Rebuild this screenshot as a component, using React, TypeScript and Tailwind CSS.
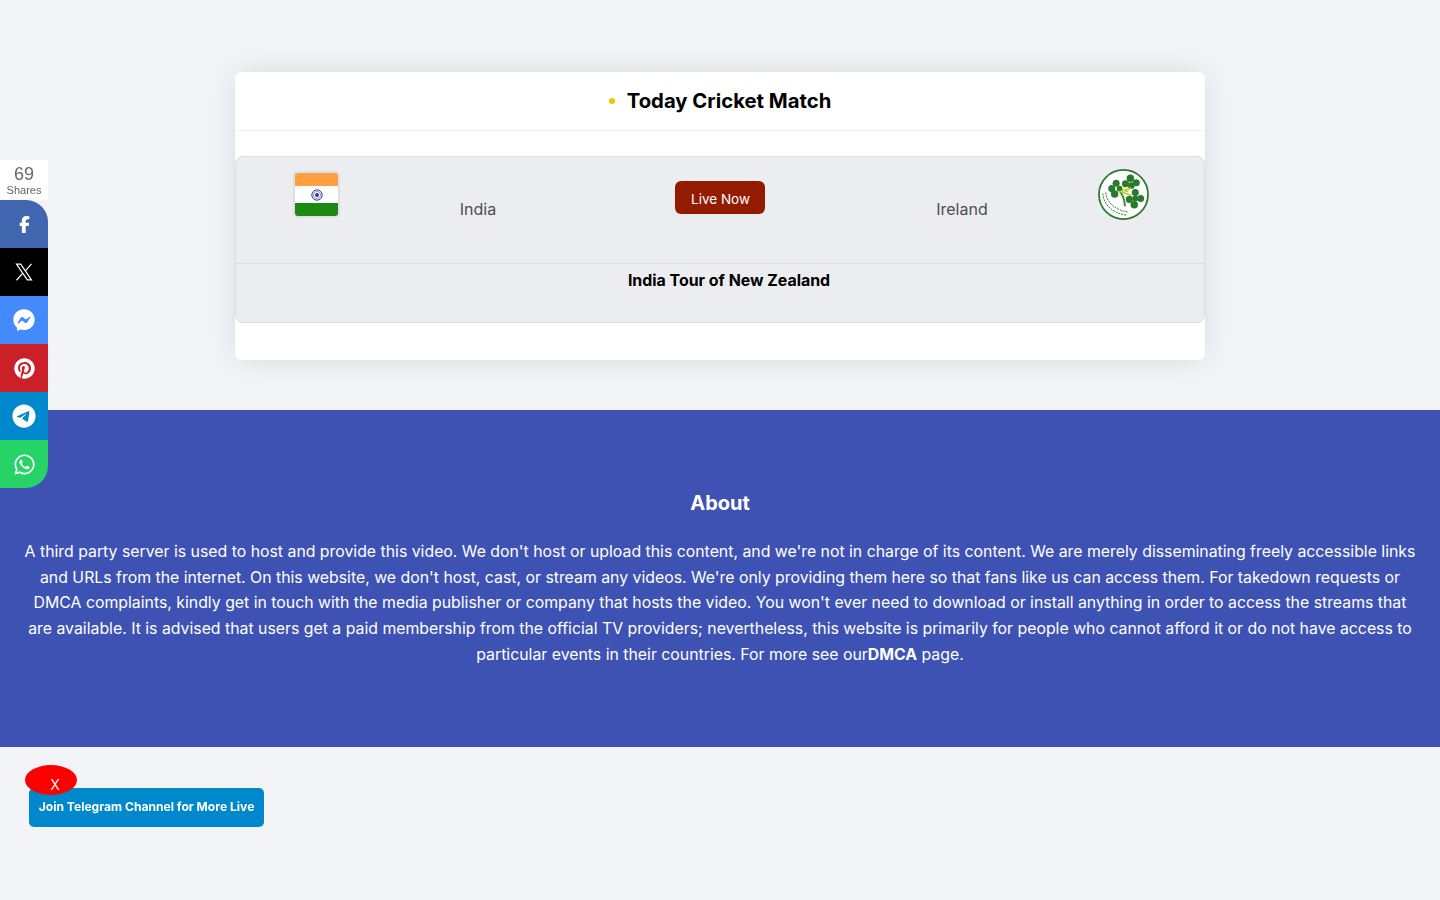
import { FaFacebookF, FaFacebookMessenger, FaPinterest, FaTelegram, FaWhatsapp } from "react-icons/fa6";

function XIcon({ size }: { size: number }) {
  return (
    <svg width={size} height={size} viewBox="0 0 24 24" fill="none" stroke="currentColor" strokeWidth="1.6">
      <path d="M2 1.5h5.6L22 22.5h-5.6z" />
      <path d="M22 1.2l-8.4 9.6M10.4 13.6L2 23" />
    </svg>
  );
}

const shares = [
  { icon: FaFacebookF, bg: "bg-[#3f66ae]", size: 17, shape: "rounded-tr-[22px]" },
  { icon: XIcon, bg: "bg-black", size: 18, shape: "" },
  { icon: FaFacebookMessenger, bg: "bg-[#448aff]", size: 22, shape: "" },
  { icon: FaPinterest, bg: "bg-[#cb2027]", size: 21, shape: "" },
  { icon: FaTelegram, bg: "bg-[#0088cc]", size: 24, shape: "" },
  { icon: FaWhatsapp, bg: "bg-[#25d366]", size: 23, shape: "rounded-br-[22px]" },
];

function IndiaFlag() {
  return (
    <div className="h-[47px] w-[47px] rounded-[5px] bg-[#dfe0e2] p-0.5">
      <div className="flex h-full w-full flex-col overflow-hidden rounded-[3px]">
        <div className="h-[13px] bg-[#ffa040]" />
        <div className="flex h-[17px] items-center justify-center bg-white">
          <svg width="12" height="12" viewBox="0 0 12 12">
            <circle cx="6" cy="6" r="5.2" fill="none" stroke="#303a92" strokeWidth="1" />
            <circle cx="6" cy="6" r="2" fill="#303a92" />
            <circle cx="6" cy="6" r="3.6" fill="none" stroke="#8d92c9" strokeWidth="1" />
          </svg>
        </div>
        <div className="flex-1 bg-[#1c8a12]" />
      </div>
    </div>
  );
}

function IrelandLogo() {
  return (
    <svg width="51" height="51" viewBox="0 0 52 52">
      <circle cx="26" cy="26" r="25" fill="#fff" stroke="#2b7a2d" strokeWidth="1.8" />
      <path d="M5 25C5 35 14 45 29 47" fill="none" stroke="#2b7a2d" strokeWidth="1" strokeDasharray="2 1" />
      <path d="M8 24C8 33 17 42 31 44" fill="none" stroke="#2b7a2d" strokeWidth="1" strokeDasharray="2 1" />
      <g fill="#2a7a2c">
        <circle cx="14" cy="20" r="3.6" />
        <circle cx="18.5" cy="14.5" r="3.6" />
        <circle cx="22" cy="20" r="3" />
        <circle cx="17" cy="25.5" r="3.8" />
        <circle cx="28" cy="15" r="3.6" />
        <circle cx="33" cy="9.5" r="3.8" />
        <circle cx="39" cy="14" r="3.6" />
        <circle cx="34" cy="17" r="3.4" />
        <circle cx="38" cy="24" r="3.6" />
        <circle cx="43.5" cy="30" r="3.6" />
        <circle cx="37" cy="36.5" r="3.8" />
        <circle cx="32" cy="31" r="3.6" />
        <circle cx="38" cy="30" r="3" />
      </g>
      <path d="M27.5 38C27 32 26.5 29 22.5 23" fill="none" stroke="#3d8b2e" strokeWidth="2" />
      <path d="M34 19.5L22.5 23L34 27M27 22L31 23.5" fill="none" stroke="#b4cf2a" strokeWidth="1.6" />
    </svg>
  );
}

export default function App() {
  return (
    <div className="min-h-[900px] bg-[#f3f4f8] font-['Inter',sans-serif] text-[#444]">
      {/* Share bar */}
      <div className="fixed left-0 top-[160px] z-10 w-12 font-['Liberation_Sans',sans-serif]">
        <div className="flex h-10 flex-col items-center bg-white pt-[4px] text-[#666]">
          <span className="text-[18px] leading-[20px]">69</span>
          <span className="text-[11px] leading-[13px]">Shares</span>
        </div>
        {shares.map(({ icon: Icon, bg, size, shape }, i) => (
          <div key={i} className={`flex h-12 items-center justify-center text-white ${bg} ${shape}`}>
            <Icon size={size} />
          </div>
        ))}
      </div>

      <div className="px-[235px] pt-[72px]">
        <div className="h-[288px] rounded-md bg-white shadow-[0_0_30px_rgba(0,0,0,0.1)]">
          <div className="flex h-[59px] items-center justify-center gap-[12px] border-b border-[#f0f1f3]">
            <span className="h-[6px] w-[6px] rounded-full bg-[#f7c300]" />
            <h2 className="text-[20.3px] font-bold text-black">Today Cricket Match</h2>
          </div>
          <div className="mt-[25px] h-[167px] rounded-lg border border-[#dcdde0] bg-[#ecedf1]">
            <div className="grid h-[107px] grid-cols-6 border-b border-[#dcdde0]">
              <div className="flex justify-center pt-[14px]">
                <IndiaFlag />
              </div>
              <div className="pt-[43px] text-center text-[16px] leading-[18px] text-[#4d4d4d]">India</div>
              <div className="col-span-2 flex justify-center pt-[24px]">
                <span className="flex h-[33px] w-[90px] items-center justify-center rounded-md bg-[#931b00] pl-px pt-[4px] text-[13.5px] text-white">
                  Live Now
                </span>
              </div>
              <div className="pt-[43px] text-center text-[16px] leading-[18px] text-[#4d4d4d]">Ireland</div>
              <div className="flex justify-center pt-[12px]">
                <IrelandLogo />
              </div>
            </div>
            <p className="pl-[18px] pt-[7px] text-center text-[15.9px] font-bold leading-[20px] text-black">
              India Tour of New Zealand
            </p>
          </div>
        </div>
      </div>

      <section className="mt-[50px] h-[337px] bg-[#3e52b4] px-[20px] pt-[81px] text-center text-white">
        <h3 className="text-[20px] font-bold leading-[24px]">About</h3>
        <p className="mt-[24px] text-[15.83px] leading-[25.7px]">
          A third party server is used to host and provide this video. We don't host or upload this content, and we're
          not in charge of its content. We are merely disseminating freely accessible links and URLs from the internet.
          On this website, we don't host, cast, or stream any videos. We're only providing them here so that fans like us
          can access them. For takedown requests or DMCA complaints, kindly get in touch with the media publisher or
          company that hosts the video. You won't ever need to download or install anything in order to access the
          streams that are available. It is advised that users get a paid membership from the official TV providers;
          nevertheless, this website is primarily for people who cannot afford it or do not have access to particular
          events in their countries. For more see our<strong className="font-bold">DMCA</strong> page.
        </p>
      </section>

      {/* Telegram popup */}
      <div className="fixed left-[29px] top-[788px] z-10">
        <a className="flex h-[39px] w-[235px] items-center justify-center rounded-[5px] bg-[#0088cc] text-[12.1px] font-bold text-white">
          Join Telegram Channel for More Live
        </a>
        <span className="absolute -left-1 -top-[23px] flex h-[30px] w-[52px] items-end justify-center rounded-[50%] bg-[#ff0000] pl-2 text-[14px] leading-[20px] text-white">
          X
        </span>
      </div>
    </div>
  );
}
